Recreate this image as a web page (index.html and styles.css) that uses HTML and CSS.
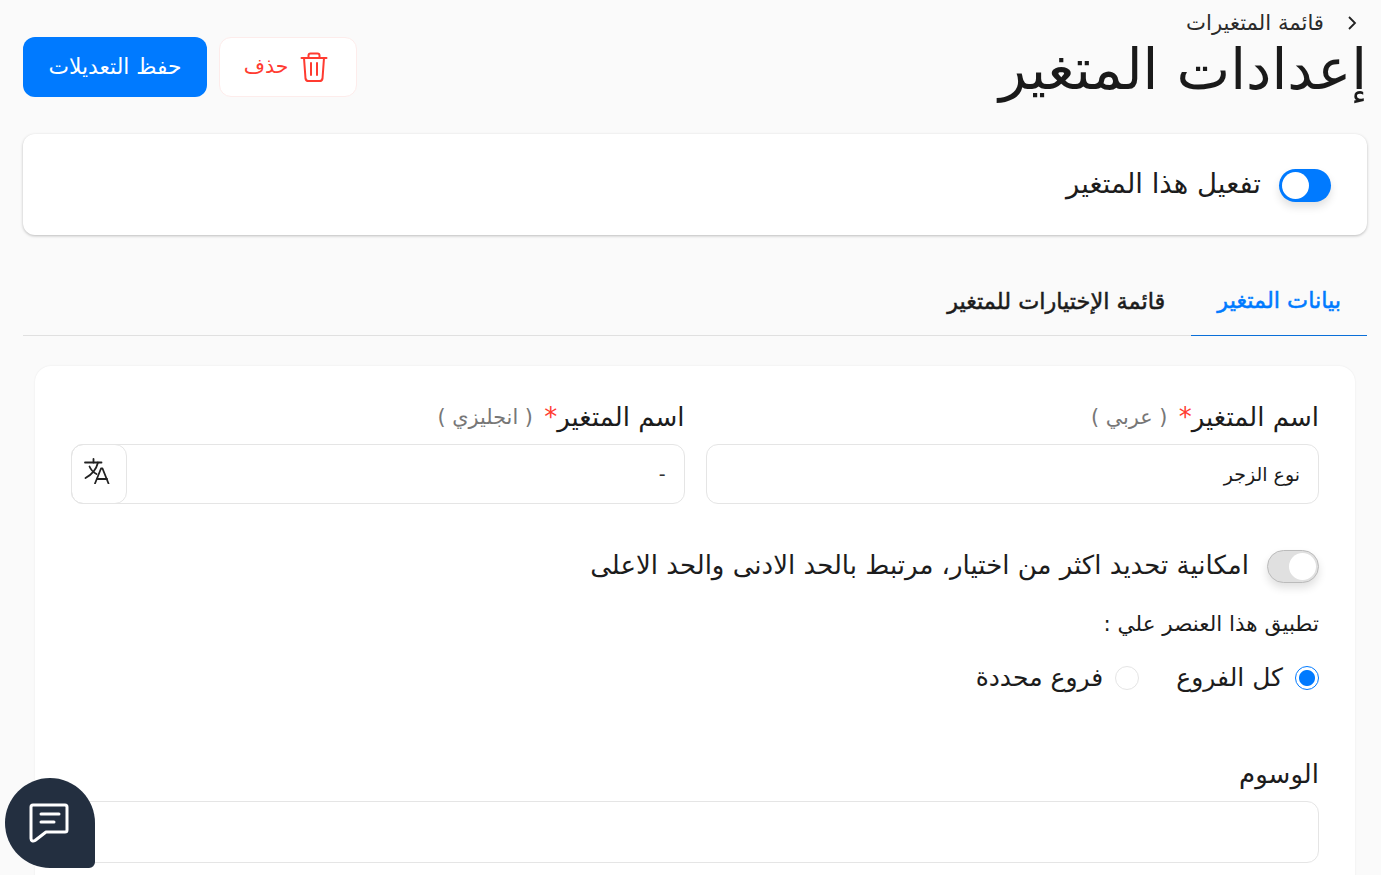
FILE: index.html
```html
<!DOCTYPE html>
<html lang="ar" dir="rtl">
<head>
<meta charset="utf-8">
<title>إعدادات المتغير</title>
<link rel="stylesheet" href="styles.css">
</head>
<body>
<main class="page">
  <header class="head">
    <div class="head-text">
      <nav class="crumb">
        <svg class="crumb-icon" viewBox="0 0 12 16" width="12" height="16"><path d="M3 2l6 6-6 6" fill="none" stroke="#222" stroke-width="1.800"/></svg>
        <span>قائمة المتغيرات</span>
      </nav>
      <h1 class="title">إعدادات المتغير</h1>
    </div>
    <div class="actions">
      <button class="btn btn-del">
        <svg viewBox="0 0 28 32" width="28" height="32"><g fill="none" stroke="#ff3b30" stroke-width="2" stroke-linecap="round" stroke-linejoin="round"><path d="M1.500 7h25"/><path d="M8.500 7V4.500a2 2 0 0 1 2-2h7a2 2 0 0 1 2 2V7"/><path d="M4 7l1.500 20.500a3 3 0 0 0 3 2.500h11a3 3 0 0 0 3-2.500L24 7"/><path d="M11 12v12M17 12v12"/></g></svg>
        <span class="btn-text">حذف</span>
      </button>
      <button class="btn btn-save"><span class="btn-text">حفظ التعديلات</span></button>
    </div>
  </header>

  <section class="card-toggle">
    <span class="switch switch-on"><i class="knob"></i></span>
    <span class="toggle-label">تفعيل هذا المتغير</span>
  </section>

  <nav class="tabs">
    <a class="tab tab-active">بيانات المتغير</a>
    <a class="tab">قائمة الإختيارات للمتغير</a>
  </nav>

  <section class="form">
    <div class="row">
      <div class="field">
        <label class="label">اسم المتغير<b class="req">*</b> <small class="hint">( عربي )</small></label>
        <div class="input">نوع الزجر</div>
      </div>
      <div class="field">
        <label class="label">اسم المتغير<b class="req">*</b> <small class="hint">( انجليزي )</small></label>
        <div class="input input-addon">
          <span class="input-val">-</span>
          <span class="addon">
            <svg viewBox="0 0 26 26" width="26" height="26"><g fill="none" stroke="#222" stroke-width="1.800" stroke-linecap="round" stroke-linejoin="round"><path d="M1 4.500h16.500"/><path d="M9.500 1v3.500"/><path d="M14 4.500c-1.500 6-6 12-12.500 15.500"/><path d="M5.500 8.500c1.500 3.500 4 6 7 7.500"/><path d="M11 25.500l6-15h1.500l6 15"/><path d="M13 21h10"/></g></svg>
          </span>
        </div>
      </div>
    </div>

    <div class="multi">
      <span class="switch switch-off"><i class="knob"></i></span>
      <span class="multi-label">امكانية تحديد اكثر من اختيار، مرتبط بالحد الادنى والحد الاعلى</span>
    </div>

    <p class="apply">تطبيق هذا العنصر علي :</p>
    <div class="radios">
      <span class="radio-item"><i class="radio radio-on"></i>كل الفروع</span>
      <span class="radio-item"><i class="radio"></i>فروع محددة</span>
    </div>

    <label class="label tags-label">الوسوم</label>
    <div class="input tags-input"></div>
  </section>
</main>

<button class="chat">
  <svg viewBox="0 0 48 48" width="48" height="48"><g fill="none" stroke="#fff" stroke-width="3" stroke-linecap="round" stroke-linejoin="round"><path d="M5 8a2 2 0 0 1 2-2h32a2 2 0 0 1 2 2v23a2 2 0 0 1-2 2H20l-11 8.500c-2 1.200-4 .5-4-2z"/><path d="M15 15h18M15 23h13"/></g></svg>
</button>
</body>
</html>
```

FILE: styles.css
```css
* { box-sizing: border-box; }
html, body { margin: 0; height: 875px; overflow: hidden; }
body {
  background: #fafafa;
  color: #1c1c1c;
  font-family: "DejaVu Sans", sans-serif;
}
.page { height: 875px; overflow: hidden; padding: 0 14px 0 23px; }
.head {
  display: flex;
  justify-content: space-between;
  align-items: flex-start;
  height: 134px;
  padding: 9px 0 0;
}
.crumb {
  display: flex;
  align-items: center;
  gap: 22px;
  padding-right: 9px;
  font-size: 21.200px;
  line-height: 28px;
  color: #2a2a2a;
}
.title {
  margin: 0;
  font-size: 57px;
  font-weight: 400;
  line-height: 64px;
  color: #1a1a1a;
}
.actions {
  display: flex;
  gap: 12px;
  padding: 28px 0 0 0;
}
.btn {
  display: flex;
  align-items: center;
  justify-content: center;
  font: inherit;
  height: 60px;
  border-radius: 12px;
  border: 0;
}
.btn-text { padding-bottom: 2px; }
.btn-del {
  width: 138px;
  gap: 12px;
  padding: 0 4px 0 0;
  font-size: 20.500px;
  background: #fff;
  color: #ff3b30;
  border: 1px solid #fdeceb;
}
.btn-save { width: 184px; font-size: 21.800px; background: #007aff; color: #fff; }
.card-toggle {
  display: flex;
  align-items: center;
  gap: 18px;
  height: 101px;
  padding: 1px 36px 0;
  background: #fff;
  border-radius: 12px;
  box-shadow: 0 1px 3px rgba(0,0,0,.25);
}
.switch {
  position: relative;
  display: block;
  flex: none;
  width: 52px;
  height: 33px;
  border-radius: 17px;
  box-shadow: 0 5px 8px rgba(0,0,0,.12);
}
.switch-on { background: #007aff; }
.switch-off { background: #e0e0e0; border: 1px solid #bbb; }
.knob {
  position: absolute;
  top: 3px;
  left: 3px;
  width: 27px;
  height: 27px;
  border-radius: 50%;
  background: #fff;
}
.switch-off .knob { top: 2px; left: 21px; }
.toggle-label { font-size: 27.500px; line-height: 33px; padding-bottom: 4px; }
.multi-label { font-size: 26px; line-height: 33px; padding-bottom: 2px; }
.tabs {
  display: flex;
  height: 71px;
  margin-top: 30px;
  border-bottom: 1px solid #e0e0e0;
}
.tab {
  display: flex;
  align-items: center;
  padding: 0 26px;
  height: 71px;
  font-size: 22.400px;
  color: #1c1c1c;
  -webkit-text-stroke: .5px currentColor;
}
.tab-active {
  color: #007aff;
  border-bottom: 1px solid #0a6fd8;
}
.form {
  margin: 30px 12px 0;
  padding: 31px 36px 30px;
  height: 600px;
  background: #fff;
  border-radius: 16px;
  box-shadow: 0 0 2px rgba(0,0,0,.08);
}
.row { display: flex; gap: 21px; }
.field { flex: 1; }
.label {
  display: block;
  font-size: 26px;
  line-height: 40px;
  height: 47px;
}
.req { color: #ff3b30; font-weight: 400; }
.hint { font-size: 20.800px; color: #777; margin-right: 3px; vertical-align: 2px; }
.input {
  display: flex;
  align-items: center;
  height: 60px;
  padding: 0 18px;
  font-size: 19px;
  background: #fff;
  border: 1px solid #e5e5e5;
  border-radius: 12px;
}
.input-addon { padding: 0 18px 0 0; justify-content: space-between; }
.input-val { color: #333; }
.addon {
  display: flex;
  align-items: center;
  justify-content: center;
  width: 56px;
  height: 60px;
  margin: -1px;
  border: 1px solid #e5e5e5;
  border-radius: 12px;
  padding: 0 5px 7px 0;
}
.multi {
  display: flex;
  align-items: flex-start;
  gap: 18px;
  height: 33px;
  margin-top: 46px;
}
.multi-label { margin-top: -1px; }
.apply { margin: 27px 0 0; font-size: 21.500px; line-height: 28px; }
.radios {
  display: flex;
  gap: 37px;
  margin-top: 22px;
}
.radio-item {
  display: flex;
  align-items: center;
  gap: 12px;
  font-size: 25px;
  line-height: 36px;
}
.radio {
  display: block;
  width: 24px;
  height: 24px;
  border-radius: 50%;
  border: 1px solid #e5e5e5;
}
.radio-on {
  border: 1.500px solid #007aff;
  background: radial-gradient(circle, #007aff 0 7.500px, #fff 8.500px);
}
.tags-label { margin-top: 58px; }
.tags-input { height: 62px; }
.chat {
  position: fixed;
  left: 5px;
  top: 778px;
  display: flex;
  align-items: center;
  justify-content: center;
  width: 90px;
  height: 90px;
  padding: 0;
  border: 0;
  background: #232f40;
  border-radius: 50% 50% 6px 50%;
}
```
